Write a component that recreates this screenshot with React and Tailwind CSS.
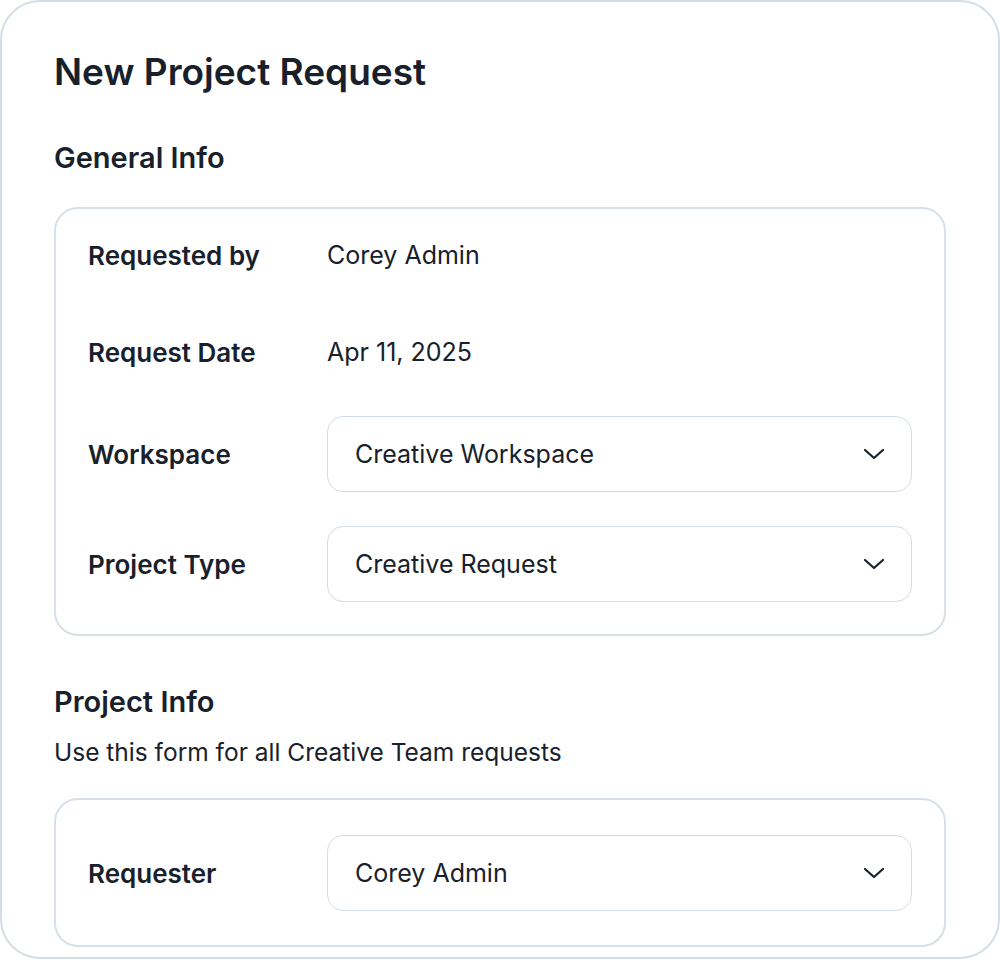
import React from "react";

function Chevron() {
  return (
    <svg width="22" height="12" viewBox="0 0 22 12" fill="none" stroke="#18212b" strokeWidth="2.2" strokeLinecap="round" strokeLinejoin="round">
      <path d="M2 2l9 8 9-8" />
    </svg>
  );
}

function Select({ value }) {
  return (
    <div className="flex-1 h-[76px] border border-[#d5dde6] rounded-[16px] flex items-center justify-between pl-[27px] pr-[26px] text-[25px] text-[#18212b]">
      <span className="pt-[2px]">{value}</span>
      <Chevron />
    </div>
  );
}

function Row({ label, children, className = "" }) {
  return (
    <div className={"flex items-center h-[76px] " + className}>
      <div className="w-[239px] shrink-0 text-[26px] font-semibold text-[#18212b] pt-[1px]">{label}</div>
      {children}
    </div>
  );
}

export default function App() {
  return (
    <div className="w-[1000px] h-[960px] bg-white" style={{ fontFamily: "Inter, 'Noto Sans', sans-serif" }}>
      <div className="h-[959px] border-2 border-[#d5dde6] rounded-[40px] px-[52px] pt-[44px]">
        <h1 className="text-[37px] font-semibold text-[#18212b] leading-[52px]">New Project Request</h1>
        <h2 className="mt-[40px] text-[29px] font-semibold text-[#18212b] leading-[40px]">General Info</h2>
        <div className="mt-[29px] border-2 border-[#d8dfe7] rounded-[24px] px-[32px] pt-[8px] pb-[32px]">
          <Row label="Requested by">
            <span className="text-[25px] text-[#18212b] pt-[2px]">Corey Admin</span>
          </Row>
          <Row label="Request Date" className="mt-[21px]">
            <span className="text-[25px] text-[#18212b] pt-[2px]">Apr 11, 2025</span>
          </Row>
          <Row label="Workspace" className="mt-[26px]">
            <Select value="Creative Workspace" />
          </Row>
          <Row label="Project Type" className="mt-[34px]">
            <Select value="Creative Request" />
          </Row>
        </div>
        <h2 className="mt-[46px] text-[29px] font-semibold text-[#18212b] leading-[40px]">Project Info</h2>
        <p className="mt-[13px] text-[24.5px] text-[#18212b] leading-[34px]">Use this form for all Creative Team requests</p>
        <div className="mt-[29px] border-2 border-[#d8dfe7] rounded-[24px] px-[32px] pt-[35px] pb-[34px]">
          <Row label="Requester">
            <Select value="Corey Admin" />
          </Row>
        </div>
      </div>
    </div>
  );
}
